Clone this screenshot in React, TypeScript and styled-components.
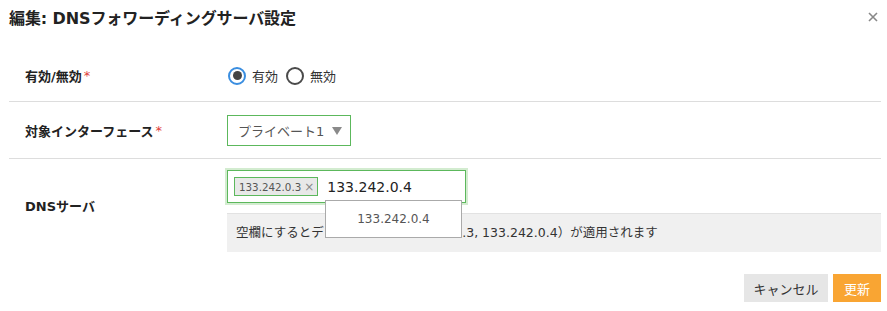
import React from 'react';
import styled, { createGlobalStyle } from 'styled-components';

const GlobalStyle = createGlobalStyle`
  *, *::before, *::after {
    box-sizing: border-box;
  }
  html, body {
    margin: 0;
    padding: 0;
    background: #ffffff;
  }
  body {
    font-family: 'DejaVu Sans', 'Noto Sans CJK JP', sans-serif;
    color: #333;
  }
`;

const Modal = styled.div`
  width: 887px;
  height: 311px;
  padding: 0 6px 0 9px;
  background: #fff;
`;

const Header = styled.div`
  height: 50px;
  display: flex;
  align-items: flex-start;
  justify-content: space-between;
  padding-top: 9px;
`;

const Title = styled.h2`
  margin: 0;
  font-size: 16px;
  line-height: 20px;
  font-weight: bold;
  color: #222;
  letter-spacing: -0.1px;
`;

const CloseButton = styled.button`
  border: none;
  background: none;
  padding: 0;
  margin: 3px 3px 0 0;
  width: 10px;
  height: 10px;
  cursor: pointer;
  display: flex;
`;

const Row = styled.div<{ $minHeight: number; $last?: boolean }>`
  display: grid;
  grid-template-columns: 218px 1fr;
  min-height: ${(p) => p.$minHeight}px;
  border-bottom: ${(p) => (p.$last ? 'none' : '1px solid #dddddd')};
`;

const Label = styled.div<{ $shift?: number }>`
  display: flex;
  align-items: center;
  padding-left: 16px;
  padding-bottom: ${(p) => p.$shift ?? 0}px;
  font-size: 13px;
  font-weight: bold;
  color: #222;
`;

const Required = styled.span`
  color: #e0403a;
  margin-left: 2px;
  font-weight: normal;
`;

const Field = styled.div<{ $pad: string }>`
  display: flex;
  flex-direction: column;
  justify-content: center;
  padding: ${(p) => p.$pad};
  padding-right: 0;
`;

const RadioGroup = styled.div`
  display: flex;
  align-items: center;
  padding-left: 1px;
`;

const RadioOption = styled.label`
  display: flex;
  align-items: center;
  font-size: 13px;
  color: #333;
  margin-right: 8px;
  cursor: pointer;
`;

const RadioCircle = styled.span<{ $checked?: boolean }>`
  width: 18px;
  height: 18px;
  border-radius: 50%;
  border: 2px solid ${(p) => (p.$checked ? '#3a8ee0' : '#4a4a4a')};
  display: flex;
  align-items: center;
  justify-content: center;
  margin-right: 6px;
  &::after {
    content: '';
    display: ${(p) => (p.$checked ? 'block' : 'none')};
    width: 9px;
    height: 9px;
    border-radius: 50%;
    background: #444;
  }
`;

const Select = styled.div`
  width: 124px;
  height: 31px;
  border: 1px solid #5cb85c;
  display: flex;
  align-items: center;
  justify-content: space-between;
  padding: 0 8px 0 10px;
  font-size: 13px;
  color: #555;
`;

const Caret = styled.span`
  width: 0;
  height: 0;
  border-left: 5px solid transparent;
  border-right: 5px solid transparent;
  border-top: 8px solid #8a8a8a;
  margin-top: 2px;
`;

const TagInputWrap = styled.div`
  position: relative;
  z-index: 5;
  width: 239px;
`;

const TagInput = styled.div`
  width: 239px;
  height: 33px;
  border: 1px solid #5cb85c;
  box-shadow: 0 0 0 2px #d3ecd0;
  display: flex;
  align-items: center;
  padding-left: 6px;
  gap: 9px;
`;

const Tag = styled.span`
  display: inline-flex;
  align-items: center;
  height: 19px;
  border: 1px solid #5cb85c;
  background: #e8e8e8;
  padding: 0 3px 0 4px;
  font-size: 10.3px;
  color: #555;
`;

const TagRemove = styled.span`
  margin-left: 3px;
  color: #888;
  font-size: 12px;
`;

const InputText = styled.span`
  font-size: 14px;
  color: #222;
`;

const Suggestions = styled.div`
  position: absolute;
  left: 98px;
  top: 30px;
  width: 137px;
  height: 38px;
  border: 1px solid #aaaaaa;
  background: #fff;
  display: flex;
  align-items: center;
  justify-content: center;
  font-size: 12px;
  color: #555;
`;

const Hint = styled.div`
  margin-top: 10px;
  height: 39px;
  border-top: 1px solid #e2e2e2;
  background: #f0f0f0;
  display: flex;
  align-items: center;
  padding: 0 0 3px 9px;
  font-size: 12.5px;
  color: #333;
`;

const Footer = styled.div`
  display: flex;
  justify-content: flex-end;
  gap: 5px;
  padding-top: 13px;
`;

const Button = styled.button<{ $primary?: boolean }>`
  height: 28px;
  width: ${(p) => (p.$primary ? '48px' : '84px')};
  border: none;
  padding: 0;
  font-family: inherit;
  font-size: 13px;
  background: ${(p) => (p.$primary ? '#f9a533' : '#e6e6e6')};
  color: ${(p) => (p.$primary ? '#ffffff' : '#333333')};
  cursor: pointer;
`;

export default function App() {
  return (
    <>
      <GlobalStyle />
      <Modal>
        <Header>
          <Title>編集: DNSフォワーディングサーバ設定</Title>
          <CloseButton aria-label="close">
            <svg width="10" height="10" viewBox="0 0 10 10">
              <path d="M1 1L9 9M9 1L1 9" stroke="#888" strokeWidth="1.6" />
            </svg>
          </CloseButton>
        </Header>

        <Row $minHeight={52}>
          <Label>
            有効/無効<Required>*</Required>
          </Label>
          <Field $pad="0">
            <RadioGroup>
              <RadioOption>
                <RadioCircle $checked />
                有効
              </RadioOption>
              <RadioOption>
                <RadioCircle />
                無効
              </RadioOption>
            </RadioGroup>
          </Field>
        </Row>

        <Row $minHeight={57}>
          <Label>
            対象インターフェース<Required>*</Required>
          </Label>
          <Field $pad="12px 0">
            <Select>
              プライベート1
              <Caret />
            </Select>
          </Field>
        </Row>

        <Row $minHeight={102} $last>
          <Label $shift={10}>DNSサーバ</Label>
          <Field $pad="11px 0 9px">
            <TagInputWrap>
              <TagInput>
                <Tag>
                  133.242.0.3<TagRemove>×</TagRemove>
                </Tag>
                <InputText>133.242.0.4</InputText>
              </TagInput>
              <Suggestions>133.242.0.4</Suggestions>
            </TagInputWrap>
            <Hint>空欄にするとデフォルト値（133.242.0.3, 133.242.0.4）が適用されます</Hint>
          </Field>
        </Row>

        <Footer>
          <Button>キャンセル</Button>
          <Button $primary>更新</Button>
        </Footer>
      </Modal>
    </>
  );
}
